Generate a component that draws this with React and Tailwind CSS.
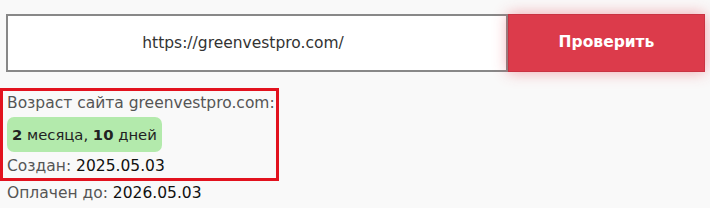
import React from "react";

const font = { fontFamily: '"DejaVu Sans", sans-serif' };

const App = () => {
  return (
    <div
      className="w-[710px] h-[208px] bg-[#f9f9f9] overflow-hidden"
      style={font}
    >
      <div className="flex pt-[14px] pl-[6px]">
        <input
          type="text"
          defaultValue="https://greenvestpro.com/"
          className="w-[502px] h-[58px] border-2 border-[#888888] bg-white text-center pr-[28px] text-[15.5px] text-[#333333] outline-none"
        />
        <button className="w-[197px] h-[58px] bg-[#dc3b4b] border border-[#c93443] text-white font-bold text-[15.5px] shadow-[0_0_14px_rgba(230,60,75,0.45)]">
          Проверить
        </button>
      </div>

      <div className="mt-[16px] w-[279px] border-[3px] border-[#e2121e] pl-[4px] text-[15.5px] leading-[24px]">
        <div className="text-[#555555] whitespace-nowrap">Возраст сайта greenvestpro.com:</div>
        <div className="my-[2px] inline-block h-[35px] px-[5px] leading-[35px] rounded-[7px] bg-[#b3eaac] text-[#222222] text-[14.8px]">
          <b>2</b> месяца, <b>10</b> дней
        </div>
        <div className="text-[#555555] whitespace-nowrap">
          Создан: <span className="text-[#111111]">2025.05.03</span>
        </div>
      </div>
      <div className="pl-[7px] text-[15.5px] leading-[24px] text-[#555555] whitespace-nowrap">
        Оплачен до: <span className="text-[#111111]">2026.05.03</span>
      </div>
    </div>
  );
};

export default App;
